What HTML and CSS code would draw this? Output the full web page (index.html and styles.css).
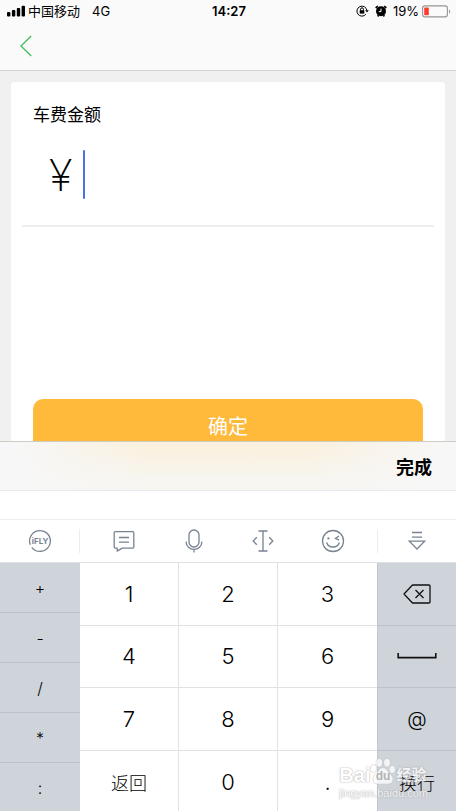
FILE: index.html
```html
<!DOCTYPE html>
<html lang="zh-CN">
<head>
<meta charset="utf-8">
<meta name="viewport" content="width=device-width, initial-scale=1">
<title>车费金额</title>
<link rel="stylesheet" href="styles.css">
</head>
<body>
<div class="screen">
  <header class="header">
    <div class="status">
      <div class="status-left">
        <svg class="signal" width="18" height="12" viewBox="0 0 18 12" aria-hidden="true">
          <rect x="0" y="7" width="3.4" height="4.5" rx="1"/><rect x="4.9" y="5" width="3.4" height="6.5" rx="1"/><rect x="9.8" y="3" width="3.4" height="8.5" rx="1"/><rect x="14.6" y="0.8" width="3.4" height="10.7" rx="1"/>
        </svg>
        <span class="carrier">中国移动</span>
        <span class="network">4G</span>
      </div>
      <time class="clock">14:27</time>
      <div class="status-right">
        <svg width="13" height="12" viewBox="0 0 13 12" fill="none" stroke="#000" aria-hidden="true">
          <path d="M9.9 9.2A5 5 0 1 1 10.9 5.5"/><path d="M9.2 5.2h3.6l-1.8 2.3z" fill="#000" stroke="none"/>
          <rect x="3.7" y="5.2" width="4.6" height="3.4" fill="#000" stroke="none"/><path d="M4.6 5.4V4.2a1.4 1.4 0 0 1 2.8 0v1.2"/>
        </svg>
        <svg class="alarm" width="12" height="12" viewBox="0 0 12 12" fill="none" stroke="#000" aria-hidden="true">
          <circle cx="6" cy="6.3" r="5" fill="#000" stroke="none"/><path d="M.7 3 2.8 1.1M9.2 1.1l2.1 1.9M2.6 11.4l1-1.2M9.4 11.4l-1-1.2" stroke-width="1.7"/><path d="M6 3.6v3H3.8" stroke="#fff"/>
        </svg>
        <span class="percent">19%</span>
        <svg width="29" height="13" viewBox="0 0 29 13" fill="none" aria-hidden="true">
          <rect x=".6" y=".9" width="24.8" height="11" rx="2.3" stroke="#969698" stroke-width="1.1"/><rect x="2.2" y="2.5" width="4.6" height="7.8" rx=".8" fill="#ff3b30"/><path d="M27 4.5c1.6.6 1.6 3.4 0 4z" fill="#969698"/>
        </svg>
      </div>
    </div>
    <nav class="nav">
      <button class="back" type="button" aria-label="返回上一页">
        <svg width="12" height="22" viewBox="0 0 12 22" fill="none" stroke="#45c25e" stroke-width="1.4" aria-hidden="true"><path d="M11.2 1 1 11l10.2 10"/></svg>
      </button>
    </nav>
  </header>

  <main class="content">
    <form class="card">
      <label class="title" for="amount">车费金额</label>
      <div class="amount-row">
        <span class="currency">¥</span>
        <span class="caret"></span>
        <input class="amount" id="amount" type="text" inputmode="decimal">
      </div>
      <button class="confirm" type="button">确定</button>
    </form>
  </main>

  <section class="keyboard" aria-label="键盘">
    <div class="accessory"><button class="done" type="button">完成</button></div>
    <div class="candidates"></div>
    <div class="tools">
      <button class="tool tool-first" type="button" aria-label="讯飞">
        <svg width="24" height="24" viewBox="0 0 24 24" fill="none" stroke="#788291" stroke-width="1.3" aria-hidden="true">
          <path d="M2.3 15.8A10.4 10.4 0 1 1 12 22.4"/><path d="M12.8 22.4A10.4 10.4 0 0 1 3.8 18.3"/>
          <text class="fly" x="12.1" y="14.8" text-anchor="middle">iFLY</text>
        </svg>
      </button>
      <div class="tool-group">
        <button class="tool" type="button" aria-label="短语">
          <svg width="22" height="22" viewBox="0 0 22 22" fill="none" stroke="#788291" stroke-width="1.3" stroke-linejoin="round" aria-hidden="true"><path d="M2.2 1.7h17.6q1 0 1 1v14.4q0 1-1 1H9.2l-5 3v-3h-2q-1 0-1-1V2.7q0-1 1-1zM6 7.5h10M6 12.2h10"/></svg>
        </button>
        <button class="tool" type="button" aria-label="语音">
          <svg width="18" height="24" viewBox="0 0 18 24" fill="none" stroke="#788291" stroke-width="1.3" aria-hidden="true"><rect x="4" y="1" width="10" height="17" rx="5"/><path d="M1.2 12.5v.8a7.8 7 0 0 0 15.6 0v-.8M9 20.3v3.2"/></svg>
        </button>
        <button class="tool" type="button" aria-label="移动光标">
          <svg width="22" height="22" viewBox="0 0 22 22" fill="none" stroke="#788291" stroke-width="1.3" aria-hidden="true"><path d="M6.5 1h9M6.5 21h9M11 1v20M4.8 7.2 1.2 11l3.6 3.8M17.2 7.2l3.6 3.8-3.6 3.8"/></svg>
        </button>
        <button class="tool" type="button" aria-label="表情">
          <svg width="24" height="24" viewBox="0 0 24 24" fill="none" stroke="#788291" stroke-width="1.3" aria-hidden="true"><circle cx="12" cy="12" r="10.5"/><path d="M5.6 13.5c1.8 6 11 6 12.8 0M18 7l-3.5 2.4L18 11.2"/><circle cx="7.4" cy="9.4" r="1.1" fill="#788291" stroke="none"/></svg>
        </button>
      </div>
      <button class="tool tool-last" type="button" aria-label="收起键盘">
        <svg width="18" height="20" viewBox="0 0 18 20" fill="none" stroke="#788291" stroke-width="1.3" aria-hidden="true"><path d="M4 1.5h10M4 6.2h10M1.3 10.2h15.4L9 18z"/></svg>
      </button>
    </div>
    <div class="keys">
      <div class="symbols">
        <button class="key" type="button">+</button>
        <button class="key" type="button">-</button>
        <button class="key" type="button">/</button>
        <button class="key" type="button">*</button>
        <button class="key" type="button">:</button>
      </div>
      <div class="digits">
        <button class="key" type="button">1</button>
        <button class="key" type="button">2</button>
        <button class="key" type="button">3</button>
        <button class="key" type="button">4</button>
        <button class="key" type="button">5</button>
        <button class="key" type="button">6</button>
        <button class="key" type="button">7</button>
        <button class="key" type="button">8</button>
        <button class="key" type="button">9</button>
        <button class="key key-word" type="button">返回</button>
        <button class="key" type="button">0</button>
        <button class="key" type="button">.</button>
      </div>
      <div class="actions">
        <button class="key" type="button" aria-label="删除">
          <svg width="28" height="20" viewBox="0 0 28 20" fill="none" stroke="#111" stroke-width="1.3" stroke-linejoin="round" aria-hidden="true"><path d="M9.5 1H26q1 0 1 1v16q0 1-1 1H9.5L1 10zM12.5 6l8 8M20.5 6l-8 8"/></svg>
        </button>
        <button class="key" type="button" aria-label="空格">
          <svg width="40" height="6" viewBox="0 0 40 6" fill="none" stroke="#111" stroke-width="1.6" aria-hidden="true"><path d="M1.2 0v4.6h37.6V0"/></svg>
        </button>
        <button class="key" type="button">@</button>
        <button class="key key-word" type="button">换行</button>
      </div>
    </div>
  </section>

  <div class="watermark">
    <div class="brand">
      <span>Bai</span>
      <span class="paw">
        <svg width="26" height="27" viewBox="0 0 26 27" aria-hidden="true">
          <g fill="#fff" stroke="#bbb" stroke-width=".6"><ellipse cx="3.6" cy="10.5" rx="3.2" ry="4"/><ellipse cx="9.3" cy="4.8" rx="3.3" ry="4.3"/><ellipse cx="17" cy="4.8" rx="3.3" ry="4.3"/><ellipse cx="22.3" cy="11.5" rx="3.2" ry="4"/><path d="M13 9.5c3 0 4 3 6.2 5.3 2.3 2.3 4.3 4 3.8 7-.5 4.8-5 4.7-10 4.2-5 .5-9.5.6-10-4.2-.5-3 1.500-4.700 3.800-7C9 12.500 10 9.500 13 9.500z"/></g>
          <text class="du" x="13" y="22" text-anchor="middle">du</text>
        </svg>
      </span>
      <span class="brand-cn">经验</span>
    </div>
    <div class="site">jingyan.baidu.com</div>
  </div>
</div>
</body>
</html>
```
FILE: styles.css
```css
* { box-sizing: border-box; }

body {
  margin: 0;
  color: #000;
  font-family: Inter, "Noto Sans CJK SC", sans-serif;
}

button {
  margin: 0;
  padding: 0;
  border: 0;
  background: none;
  color: inherit;
  font: inherit;
}

svg { display: block; flex: none; }

.screen {
  position: relative;
  display: flex;
  flex-direction: column;
  height: 100vh;
  overflow: hidden;
  background: #f0f0f0;
}

.header {
  flex: none;
  border-bottom: 1px solid #d5d5d6;
  background: #fafafa;
}

.status {
  display: grid;
  grid-template-columns: 1fr auto 1fr;
  align-items: center;
  height: 22px;
  padding: 0 5px 0 7px;
  font-size: 13px;
  line-height: 22px;
}

.status-left, .status-right { display: flex; align-items: center; }
.status-left { gap: 3px; }
.status-right { justify-content: flex-end; gap: 3px; }
.status-right .alarm { margin: 0 3px; }
.network { margin-left: 9px; }
.clock { font-weight: 600; }

.nav { display: flex; align-items: center; height: 48px; padding: 0 12px; }
.back { display: flex; padding: 0 8px; }

.content {
  flex: 1;
  min-height: 0;
  padding: 11px 11px 0;
  overflow: hidden;
}

.card {
  display: flex;
  flex-direction: column;
  height: 400px;
  padding: 20px 11px 0;
  border-radius: 4px;
  background: #fff;
}

.title {
  padding: 0 11px;
  font-size: 17px;
  line-height: 26px;
}

.amount-row {
  display: flex;
  align-items: center;
  height: 99px;
  padding: 0 27px 4px;
  border-bottom: 2px solid #eee;
}

.currency {
  width: 24px;
  font-size: 44px;
  font-weight: 200;
  line-height: 50px;
}

.caret {
  width: 2px;
  height: 49px;
  margin-left: 10px;
  border-radius: 1px;
  background: #4a70ea;
}

.amount {
  flex: 1;
  min-width: 0;
  height: 50px;
  padding: 0;
  border: 0;
  outline: 0;
  background: transparent;
  font: inherit;
  font-size: 40px;
}

.confirm {
  height: 52px;
  margin: 172px 11px 0;
  border-radius: 10px;
  background: #ffb93b;
  color: #fff;
  font-size: 20px;
}

.keyboard {
  flex: none;
  margin-bottom: -2px;
  background: #fff;
}

.accessory {
  display: flex;
  justify-content: flex-end;
  align-items: center;
  height: 50px;
  padding: 0 24px;
  border-top: 1px solid #cfccc6;
  border-bottom: 1px solid #e6e9ed;
  background:
    linear-gradient(to right, #f7f7f7 4%, transparent 32%, transparent 68%, #f7f7f7 96%),
    linear-gradient(#fbf0dc, #f7f6f1 80%);
}

.done { font-size: 18px; font-weight: 600; }

.candidates { height: 28px; }

.tools {
  display: grid;
  grid-template-columns: 80px 1fr 79px;
  align-items: center;
  height: 44px;
  border-top: 1px solid #ebedef;
  border-bottom: 1px solid #dfe1e4;
}

.tool { display: flex; justify-content: center; align-items: center; height: 24px; }
.tool-first { border-right: 1px solid #ebedef; }
.tool-last { border-left: 1px solid #ebedef; }
.tool-group { display: grid; grid-template-columns: repeat(4, 1fr); padding: 0 9px; }

.fly {
  fill: #788291;
  stroke: none;
  font-size: 8px;
  font-weight: 700;
}

.keys {
  display: grid;
  grid-template-columns: 80px 1fr 79px;
  height: 250px;
}

.symbols, .actions { display: grid; background: #cfd3da; }
.symbols { grid-template-rows: repeat(5, 1fr); font-size: 16px; }
.actions { grid-template-rows: repeat(4, 1fr); border-left: 1px solid #c3c7ce; font-size: 20px; }
.digits {
  display: grid;
  grid-template-columns: repeat(3, 1fr);
  grid-template-rows: repeat(4, 1fr);
  font-size: 22px;
}

.key {
  display: flex;
  justify-content: center;
  align-items: center;
  border-bottom: 1px solid #bcc0c8;
  font-weight: 300;
}

.digits .key { border-right: 1px solid #e1e2e4; border-bottom-color: #e1e2e4; }
.digits .key:nth-child(3n) { border-right: 0; }
.digits .key:nth-last-child(-n+3), .actions .key:last-child { border-bottom: 0; }
.keys .key-word { font-size: 18px; }

.watermark {
  position: absolute;
  right: 28px;
  bottom: 11px;
  color: #fff;
  opacity: 0.75;
  pointer-events: none;
  text-shadow: 0 0 1px #999, 0 0 2px #aaa;
}

.brand {
  display: flex;
  align-items: flex-end;
  height: 30px;
  font-family: "Liberation Sans", "Noto Sans CJK SC", sans-serif;
  font-size: 20px;
  font-weight: 700;
  line-height: 24px;
}

.paw { padding-bottom: 2px; }
.brand-cn { font-size: 15px; }
.du { fill: #aaa; font-size: 12px; font-weight: 700; text-shadow: none; }

.site {
  font-family: "Liberation Sans", sans-serif;
  font-size: 11px;
  line-height: 13px;
}
```
